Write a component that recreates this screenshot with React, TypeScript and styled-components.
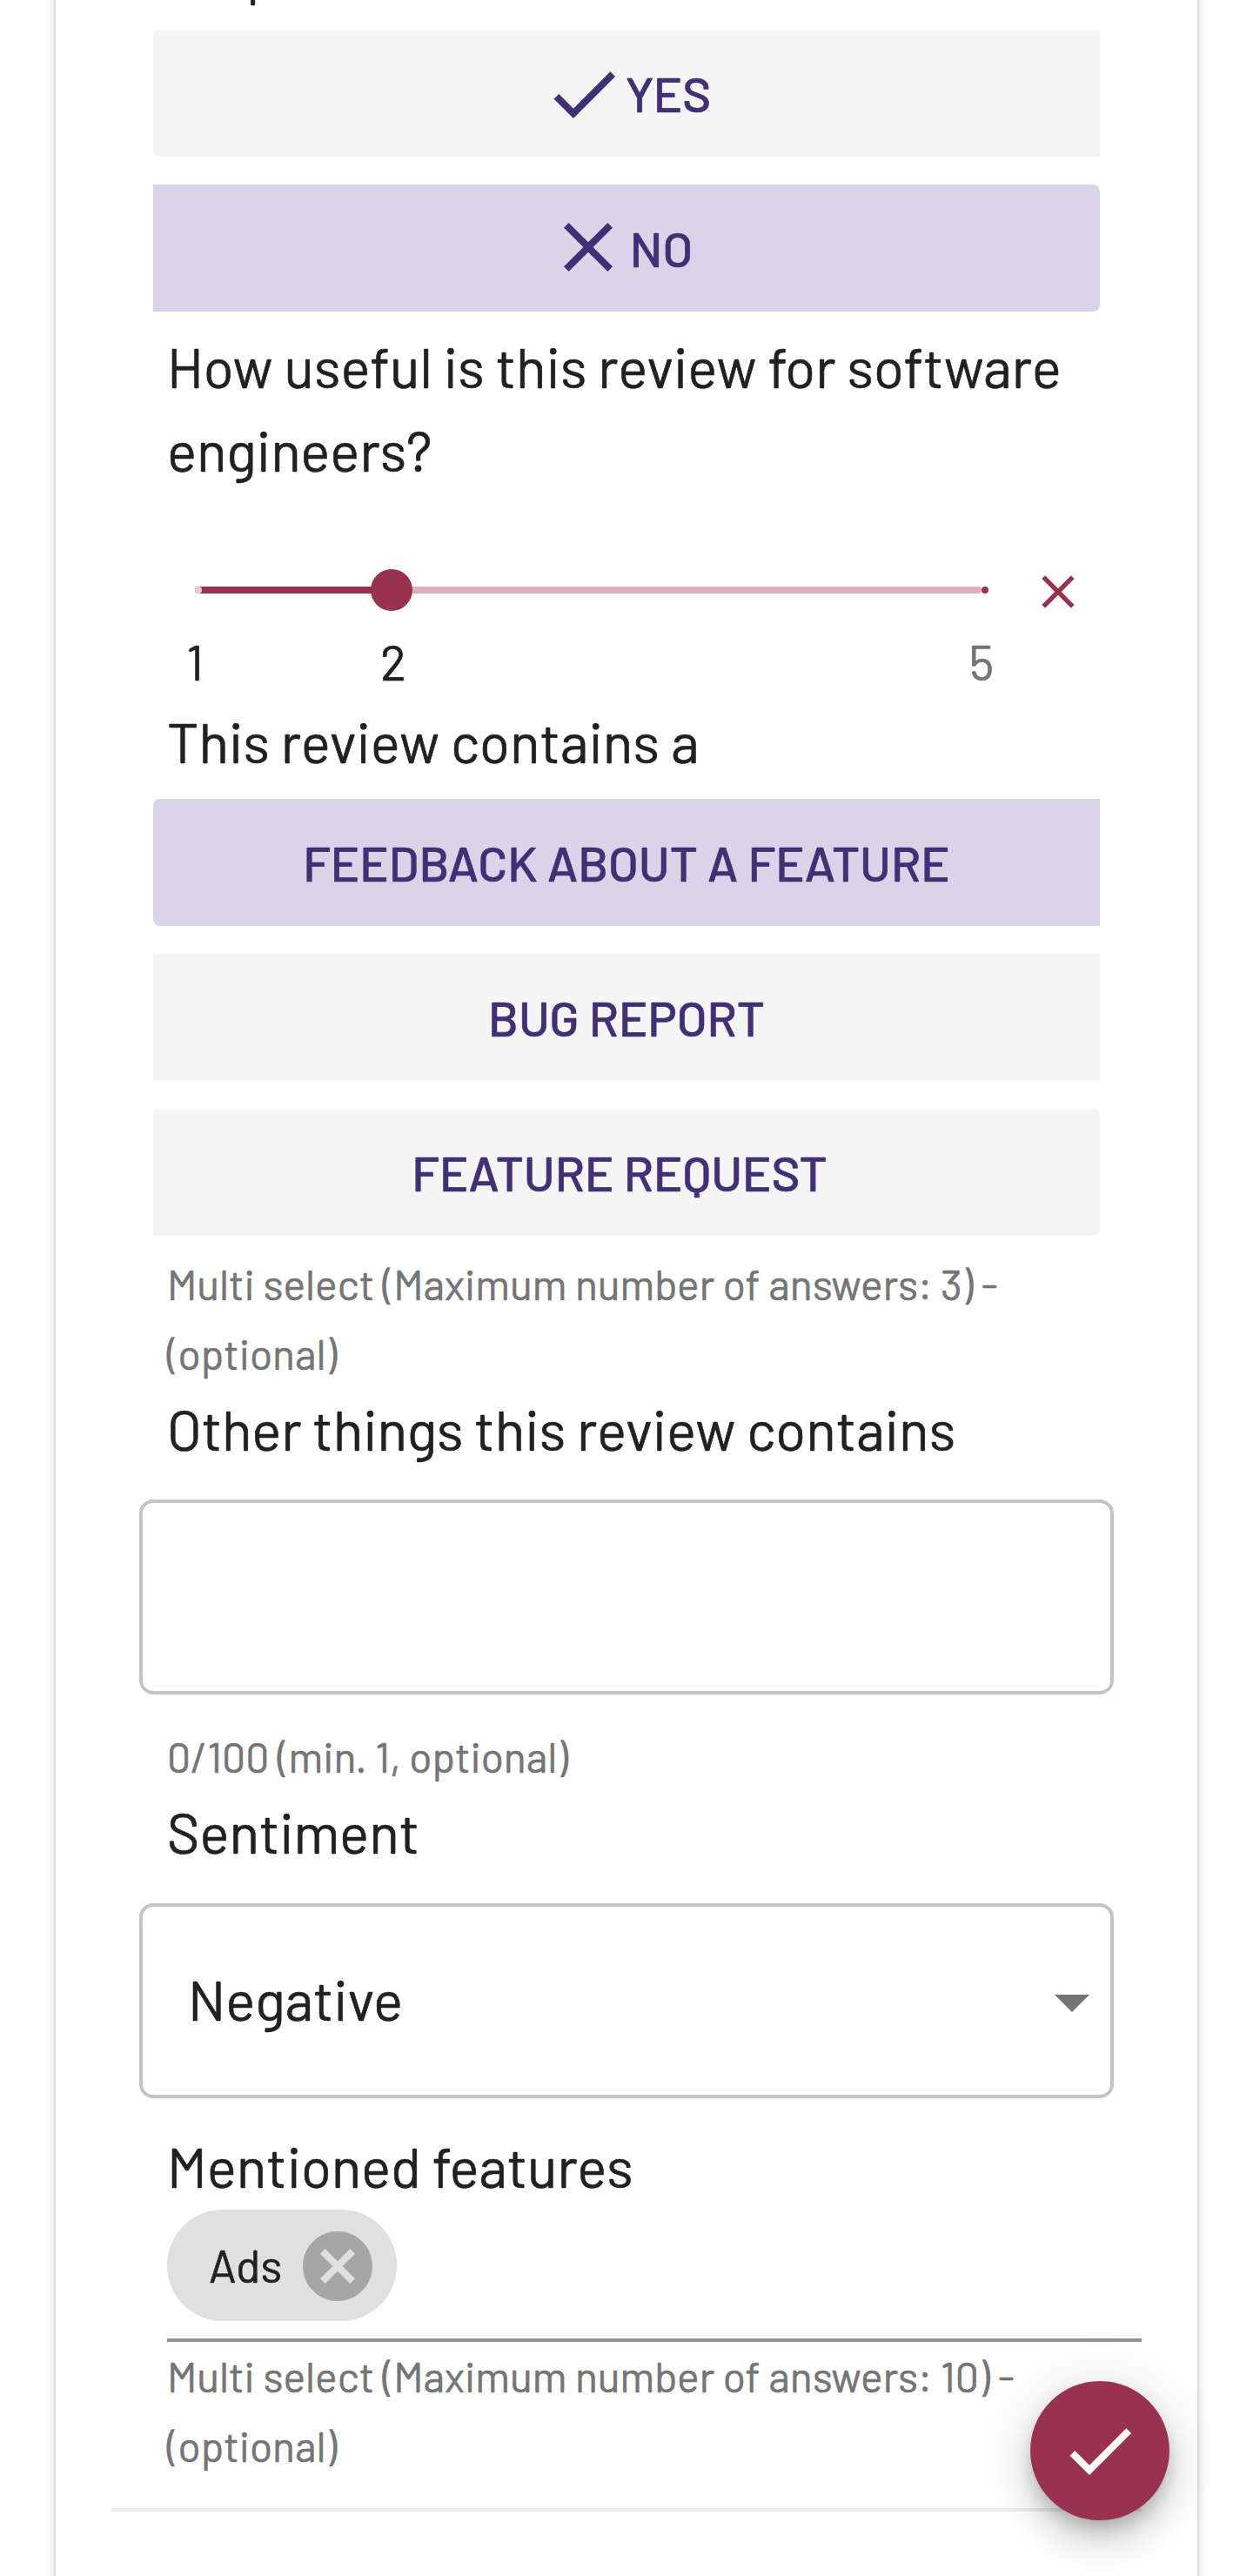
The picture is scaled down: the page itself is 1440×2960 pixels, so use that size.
import React, { useState } from 'react';
import styled, { createGlobalStyle } from 'styled-components';

const ink = '#212121';
const muted = '#757575';
const violet = '#413075';
const wine = '#99324f';

const GlobalStyle = createGlobalStyle`
  *, *::before, *::after { box-sizing: border-box; }
  body {
    margin: 0;
    background: #fff;
    font-family: Barlow, Roboto, "Liberation Sans", sans-serif;
    color: ${ink};
    -webkit-text-stroke: 0.6px currentColor;
  }
  button { font-family: inherit; border: 0; padding: 0; cursor: pointer; }
`;

const Page = styled.div`
  position: relative;
  width: 1440px;
  height: 2960px;
  padding: 0 64px;
  overflow: hidden;
`;

const Card = styled.main`
  display: flex;
  flex-direction: column;
  height: 3200px;
  margin-top: -76px;
  padding: 0 64px;
  background: #fff;
  box-shadow: 0 4px 12px rgba(0, 0, 0, 0.2), 0 4px 4px rgba(0, 0, 0, 0.14),
    0 8px 4px -4px rgba(0, 0, 0, 0.12);
`;

const Field = styled.section<{ $gap?: number }>`
  display: flex;
  flex-direction: column;
  margin-top: ${(p) => p.$gap ?? 0}px;
`;

const Label = styled.h2`
  margin: -4px 0 4px 64px;
  font-size: 64px;
  font-weight: 400;
  line-height: 96px;
`;

const Helper = styled.p<{ $gap: number }>`
  width: 1088px;
  margin: ${(p) => p.$gap - 3}px 0 3px 64px;
  font-size: 48px;
  line-height: 80px;
  color: ${muted};
`;

const ButtonGroup = styled.div`
  display: flex;
  flex-direction: column;
  gap: 32px;
  margin: 14px 48px 0;
`;

const Choice = styled.button<{ $on?: boolean; $round?: 'left' | 'right'; $end?: number }>`
  display: flex;
  align-items: center;
  justify-content: center;
  height: 146px;
  padding-right: ${(p) => p.$end ?? 0}px;
  border-radius: ${(p) =>
    p.$round === 'left' ? '8px 0 0 8px' : p.$round === 'right' ? '0 8px 8px 0' : '0'};
  background: ${(p) => (p.$on ? '#d9d4e8' : '#f5f5f5')};
  color: ${violet};
  font-size: 56px;
  font-weight: 500;
  line-height: 98px;
  text-transform: uppercase;
  white-space: nowrap;
`;

const Icon = styled.svg<{ $size: number; $drop?: number }>`
  display: block;
  flex: none;
  width: ${(p) => p.$size}px;
  height: ${(p) => p.$size}px;
  margin-top: ${(p) => p.$drop ?? 0}px;
  fill: currentColor;
`;

const SliderRow = styled.div`
  display: flex;
  height: 64px;
  margin: 79px 0 97px 96px;
`;

const Slider = styled.div`
  position: relative;
  width: 904px;
  height: 60px;
  color: ${wine};
`;

const Rail = styled.div`
  position: absolute;
  inset: 26px 0;
  border-radius: 4px;
  background: #d9b0bb;
`;

const Track = styled.div`
  position: absolute;
  top: 26px;
  left: 0;
  height: 8px;
  border-radius: 4px;
  background: ${wine};
`;

const Tick = styled.span<{ $filled?: boolean }>`
  position: absolute;
  top: 26px;
  width: 8px;
  height: 8px;
  border-radius: 50%;
  background: ${(p) => (p.$filled ? '#e8cdd5' : wine)};
`;

const Thumb = styled.span`
  position: absolute;
  top: 6px;
  width: 48px;
  height: 48px;
  margin-left: -24px;
  border-radius: 50%;
  background: ${wine};
`;

const TickLabel = styled.span<{ $muted?: boolean; $nudge?: number }>`
  position: absolute;
  top: 71.5px;
  margin-left: ${(p) => p.$nudge ?? 0}px;
  transform: translateX(-50%);
  font-size: 56px;
  line-height: 80px;
  color: ${(p) => (p.$muted ? muted : ink)};
`;

const ClearButton = styled.button`
  width: 64px;
  height: 64px;
  margin-left: 56px;
  background: none;
  color: ${wine};
`;

const Outlined = styled.div`
  display: flex;
  align-items: center;
  justify-content: space-between;
  height: 224px;
  margin: 30px 32px 0;
  padding-left: 52px;
  border: 4px solid #c4c4c4;
  border-radius: 16px;
`;

const TextBox = styled.textarea`
  display: block;
  height: 224px;
  margin: 29px 32px 0;
  padding: 52px;
  border: 4px solid #c4c4c4;
  border-radius: 16px;
  outline: 0;
  resize: none;
  background: none;
  font: inherit;
  font-size: 64px;
`;

const SelectValue = styled.span`
  padding-bottom: 4px;
  font-size: 64px;
  line-height: 96px;
`;

const Caret = styled.span`
  margin: 2px -4px 0 0;
  color: ${muted};
`;

const ChipInput = styled.div`
  display: flex;
  height: 152px;
  margin: -2px 0 0 64px;
  border-bottom: 4px solid #949494;
`;

const Chip = styled.div`
  display: flex;
  align-items: center;
  width: 264px;
  height: 128px;
  padding-left: 48px;
  border-radius: 64px;
  background: #e0e0e0;
`;

const ChipText = styled.span`
  width: 100px;
  padding-bottom: 2px;
  font-size: 52px;
  line-height: 80px;
`;

const ChipDelete = styled.button`
  background: none;
  color: #a6a6a6;
  padding-top: 2px;
`;

const Divider = styled.hr`
  width: 100%;
  height: 4px;
  margin: 29px 0 0;
  border: 0;
  background: #ececec;
`;

const Fab = styled.button`
  position: absolute;
  left: 1184px;
  top: 2736px;
  display: flex;
  align-items: center;
  justify-content: center;
  width: 160px;
  height: 160px;
  border-radius: 50%;
  background: ${wine};
  color: #fff;
  box-shadow: 0 12px 20px -4px rgba(0, 0, 0, 0.2), 0 24px 40px rgba(0, 0, 0, 0.14),
    0 4px 72px rgba(0, 0, 0, 0.12);
`;

const CHECK = 'M9 16.17 4.83 12l-1.42 1.41L9 19 21 7l-1.41-1.41z';
const CLOSE =
  'M19 6.41 17.59 5 12 10.59 6.41 5 5 6.41 10.59 12 5 17.59 6.41 19 12 13.41 17.59 19 19 17.59 13.41 12z';
const CANCEL =
  'M12 2C6.47 2 2 6.47 2 12s4.47 10 10 10 10-4.47 10-10S17.53 2 12 2zm5 13.59L15.59 17 12 13.41 8.41 17 7 15.59 10.59 12 7 8.41 8.41 7 12 10.59 15.59 7 17 8.41 13.41 12 17 15.59z';
const CARET = 'M7 10l5 5 5-5z';

function Glyph({ d, size = 96, drop }: { d: string; size?: number; drop?: number }) {
  return (
    <Icon viewBox="0 0 24 24" $size={size} $drop={drop} aria-hidden="true">
      <path d={d} />
    </Icon>
  );
}

const percent = (value: number) => ((value - 1) / 4) * 100;

export default function App() {
  const [useful, setUseful] = useState(false);
  const [rating] = useState(2);
  const at = percent(rating);

  return (
    <>
      <GlobalStyle />
      <Page>
        <Card>
          <Field>
            <Label>Helpful?</Label>
            <ButtonGroup>
              <Choice $round="left" $on={useful} onClick={() => setUseful(true)}>
                <Glyph d={CHECK} drop={2} />
                <span>Yes</span>
              </Choice>
              <Choice $round="right" $on={!useful} $end={16} onClick={() => setUseful(false)}>
                <Glyph d={CLOSE} drop={-2} />
                <span>No</span>
              </Choice>
            </ButtonGroup>
          </Field>

          <Field $gap={19}>
            <Label>How useful is this review for software engineers?</Label>
            <SliderRow>
              <Slider>
                <Rail />
                <Track style={{ width: `${at}%` }} />
                <Tick $filled />
                <Tick style={{ left: '100%' }} />
                <Thumb style={{ left: `${at}%` }} />
                <TickLabel style={{ left: '0%' }}>1</TickLabel>
                <TickLabel $nudge={2} style={{ left: `${at}%` }}>{rating}</TickLabel>
                <TickLabel $muted style={{ left: '100%' }}>5</TickLabel>
              </Slider>
              <ClearButton aria-label="Clear">
                <Glyph d={CLOSE} size={64} />
              </ClearButton>
            </SliderRow>
          </Field>

          <Field $gap={-1}>
            <Label>This review contains a</Label>
            <ButtonGroup>
              <Choice $round="left" $on>Feedback about a feature</Choice>
              <Choice>Bug report</Choice>
              <Choice $round="right" $end={16}>Feature request</Choice>
            </ButtonGroup>
            <Helper $gap={18}>Multi select (Maximum number of answers: 3) - (optional)</Helper>
          </Field>

          <Field>
            <Label>Other things this review contains</Label>
            <TextBox aria-label="Other things" />
            <Helper $gap={34}>0/100 (min. 1, optional)</Helper>
          </Field>

          <Field>
            <Label>Sentiment</Label>
            <Outlined>
              <SelectValue>Negative</SelectValue>
              <Caret>
                <Glyph d={CARET} />
              </Caret>
            </Outlined>
          </Field>

          <Field $gap={34}>
            <Label>Mentioned features</Label>
            <ChipInput>
              <Chip>
                <ChipText>Ads</ChipText>
                <ChipDelete aria-label="Remove Ads">
                  <Glyph d={CANCEL} />
                </ChipDelete>
              </Chip>
            </ChipInput>
            <Helper $gap={2}>Multi select (Maximum number of answers: 10) - (optional)</Helper>
          </Field>
          <Divider />
        </Card>
        <Fab aria-label="Submit">
          <Glyph d={CHECK} />
        </Fab>
      </Page>
    </>
  );
}
